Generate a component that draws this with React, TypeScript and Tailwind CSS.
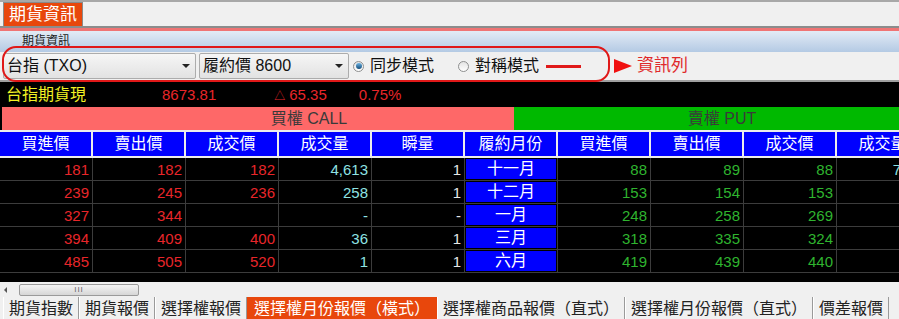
import React from "react";

const font = "font-['Liberation_Sans','Noto_Sans_CJK_TC',sans-serif]";

const headers = ["買進價", "賣出價", "成交價", "成交量", "瞬量", "履約月份", "買進價", "賣出價", "成交價", "成交量"];

const rows = [
  ["181", "182", "182", "4,613", "1", "十一月", "88", "89", "88", "7215"],
  ["239", "245", "236", "258", "1", "十二月", "153", "154", "153", ""],
  ["327", "344", "", "-", "-", "一月", "248", "258", "269", ""],
  ["394", "409", "400", "36", "1", "三月", "318", "335", "324", ""],
  ["485", "505", "520", "1", "1", "六月", "419", "439", "440", ""],
];

const cellColor = (i: number) => {
  if (i < 3) return "text-[#e8262a]";
  if (i === 3 || i === 9) return "text-[#8fe3e3]";
  if (i === 4) return "text-[#e6e6e6]";
  return "text-[#2fb42f]";
};

const bottomTabs = ["期貨指數", "期貨報價", "選擇權報價", "選擇權月份報價（橫式）", "選擇權商品報價（直式）", "選擇權月份報價（直式）", "價差報價"];

const Select = ({ label, width }: { label: string; width: string }) => (
  <div className={`${width} shrink-0 h-[26px] flex items-center justify-between pl-[3px] pr-[5px] border border-[#acacac] rounded-[2px] bg-gradient-to-b from-[#f6f6f6] to-[#e2e2e2] text-[16px] text-[#111]`}>
    <span>{label}</span>
    <span className="w-0 h-0 border-l-[4px] border-r-[4px] border-t-[4px] border-l-transparent border-r-transparent border-t-[#222]" />
  </div>
);

const Radio = ({ checked, label }: { checked?: boolean; label: string }) => (
  <div className="flex items-center gap-[6px] text-[16px] text-[#111] whitespace-nowrap">
    <span className="w-[11px] h-[11px] rounded-full border border-[#8e8f8f] bg-gradient-to-b from-[#e4e4e4] to-[#ffffff] flex items-center justify-center">
      {checked && <span className="w-[6px] h-[6px] rounded-full bg-gradient-to-b from-[#6fb6e6] to-[#124c78]" />}
    </span>
    <span>{label}</span>
  </div>
);

export default function App() {
  return (
    <div className={`w-[899px] h-[319px] overflow-hidden relative bg-[#f0f0f0] ${font}`}>
      {/* top tab strip */}
      <div className="h-[26px] border-t-2 border-[#a8a8a8] flex items-end pl-[3px]">
        <div className="h-[24px] px-[5px] flex items-center bg-[#e8470c] border border-[#8a8a8a] border-b-0 text-white text-[17px] leading-none">
          期貨資訊
        </div>
      </div>
      <div className="h-[2px] bg-[#8c8c8c]" />
      <div className="h-[3px] bg-[#ef7474]" />
      <div className="h-[21px] bg-gradient-to-b from-[#e3ebf5] to-[#b4cae4] pl-[22px] pt-[4px] text-[12px] leading-none text-[#222]">
        期貨資訊
      </div>

      {/* toolbar */}
      <div className="h-[28px] flex items-center pl-[3px]">
        <Select label="台指 (TXO)" width="w-[193px]" />
        <div className="w-[3px] shrink-0" />
        <Select label="履約價 8600" width="w-[150px]" />
        <div className="ml-[4px]">
          <Radio checked label="同步模式" />
        </div>
        <div className="ml-[24px]">
          <Radio label="對稱模式" />
        </div>
        <div className="ml-[7px] w-[35px] h-[3px] bg-[#e01a1a] shrink-0" />
        <div className="ml-[33px] w-0 h-0 border-t-[7px] border-b-[7px] border-l-[18px] border-t-transparent border-b-transparent border-l-[#f01010]" />
        <div className="ml-[5px] text-[17px] text-[#e0282a] whitespace-nowrap">資訊列</div>
      </div>
      <div className="h-[2px] bg-[#a0a0a0]" />

      {/* annotation outline */}
      <div className="absolute left-[2px] top-[46px] w-[608px] h-[36px] border-2 border-[#e01818] rounded-[14px]" />

      {/* quote row */}
      <div className="h-[25px] bg-black flex items-center text-[15px] leading-none whitespace-nowrap">
        <span className="ml-[6px] text-[16px] text-[#f2f224]">台指期貨現</span>
        <span className="ml-[76px] text-[#e8262a]">8673.81</span>
        <span className="ml-[58px] text-[#e8262a]"><span className="text-[11px] mr-[4px]">△</span>65.35</span>
        <span className="ml-[32px] text-[#e8262a]">0.75%</span>
      </div>

      {/* call / put header */}
      <div className="h-[23px] flex bg-black pl-[2px] text-[16px] text-[#3a3a3a] leading-none">
        <div className="w-[512px] shrink-0 bg-[#fe6868] flex items-center justify-center pl-[102px]">買權 CALL</div>
        <div className="w-[416px] shrink-0 bg-[#00b900] flex items-center justify-center">賣權 PUT</div>
      </div>

      {/* table */}
      <div className="w-[930px] bg-black">
        <div className="grid grid-cols-[repeat(10,93px)] border-t-2 border-b-2 border-[#ececec] bg-[#ececec]">
          {headers.map((h, i) => (
            <div key={i} className="h-[24px] bg-[#0000ff] border-r-2 border-[#ececec] text-white text-[16px] leading-none flex items-center justify-center">
              {h}
            </div>
          ))}
        </div>
        {rows.map((r, ri) => (
          <div key={ri} className="grid grid-cols-[repeat(10,93px)] h-[23px] border-b border-[#3c3c3c]">
            {r.map((c, ci) =>
              ci === 5 ? (
                <div key={ci} className="border-r border-[#3c3c3c] p-[1px]">
                  <div className="h-full bg-[#0000ff] text-white text-[16px] leading-none flex items-center justify-center">{c}</div>
                </div>
              ) : (
                <div key={ci} className={`border-r border-[#3c3c3c] flex items-center justify-end pr-[3px] text-[15px] leading-none ${cellColor(ci)}`}>
                  {c}
                </div>
              )
            )}
          </div>
        ))}
        <div className="h-[9px]" />
      </div>

      {/* scrollbar */}
      <div className="h-[15px] flex items-center pl-[4px]">
        <span className="w-0 h-0 border-t-[3px] border-b-[3px] border-r-[3px] border-t-transparent border-b-transparent border-r-[#555]" />
        <div className="ml-[12px] w-[120px] h-[12px] rounded-[2px] border border-[#9a9a9a] bg-gradient-to-b from-[#f4f4f4] to-[#d6d6d6] flex items-center justify-center text-[8px] leading-none text-[#666] tracking-[1px]">
          III
        </div>
      </div>

      {/* bottom tabs */}
      <div className="h-[23px] flex items-stretch pl-[3px] text-[16px] leading-none text-[#222]">
        {bottomTabs.map((t, i) => (
          <div
            key={i}
            className={`shrink-0 whitespace-nowrap flex items-center border-r border-l ${i === 3 ? "px-[6px] bg-[#e8470c] text-white border-[#e8470c]" : "px-[5px] border-l-white border-r-[#9a9a9a]"}`}
          >
            {t}
          </div>
        ))}
      </div>
    </div>
  );
}
